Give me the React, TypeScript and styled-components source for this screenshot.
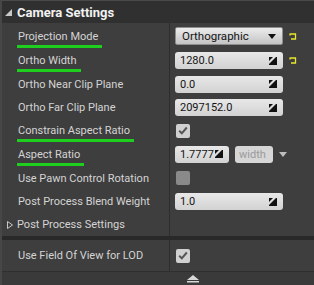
import React from "react";
import styled, { createGlobalStyle } from "styled-components";

const Global = createGlobalStyle`
  html, body { margin: 0; padding: 0; background: #3e3e3e; }
  body { font-family: Roboto, "Noto Sans", "Liberation Sans", sans-serif; }
`;

const Panel = styled.div`
  width: 314px;
  height: 285px;
  display: flex;
  flex-direction: column;
  background: #3e3e3e;
  border-left: 2px solid #474747;
  box-sizing: border-box;
  overflow: hidden;
`;

const Header = styled.div`
  height: 23px;
  flex: none;
  display: flex;
  align-items: center;
  gap: 5px;
  padding-left: 3px;
  background: #303030;
  border-top: 1px solid #4a4a4a;
  box-sizing: border-box;
  color: #f2f2f2;
  font-weight: 700;
  font-size: 13px;
`;

const Row = styled.div<{ $h: number }>`
  height: ${(p) => p.$h}px;
  flex: none;
  display: grid;
  grid-template-columns: 168px 1fr;
`;

const LabelCell = styled.div<{ $indent?: number }>`
  display: flex;
  align-items: center;
  gap: 4px;
  padding-left: ${(p) => p.$indent ?? 16}px;
  border-right: 1px solid #2d2d2d;
  color: #d4d4d4;
  font-size: 11px;
  white-space: nowrap;
`;

const ValueCell = styled.div`
  display: flex;
  align-items: center;
  gap: 6px;
  padding-left: 5px;
`;

const Label = styled.span<{ $mark?: boolean }>`
  position: relative;
  &::after {
    content: "";
    display: ${(p) => (p.$mark ? "block" : "none")};
    position: absolute;
    left: -1px;
    right: -4px;
    bottom: -5px;
    height: 3px;
    background: #1fcf1f;
  }
`;

const Combo = styled.div`
  width: 108px;
  height: 18px;
  box-sizing: border-box;
  border-radius: 2px;
  border: 1px solid #8e8e8e;
  background: linear-gradient(#ececec, #c4c4c4);
  display: flex;
  align-items: center;
  justify-content: space-between;
  padding: 0 6px 0 6px;
  color: #141414;
  font-size: 11.5px;
`;

const Field = styled.div<{ $w?: number }>`
  width: ${(p) => p.$w ?? 108}px;
  height: 17px;
  box-sizing: border-box;
  border-radius: 3px;
  background: linear-gradient(#e8e8e8, #d2d2d2);
  display: flex;
  align-items: center;
  justify-content: space-between;
  padding: 0 6px 0 5px;
  color: #141414;
  font-size: 11px;
`;

const GhostField = styled.div`
  width: 38px;
  height: 17px;
  box-sizing: border-box;
  border-radius: 3px;
  background: #d6d6d6;
  display: flex;
  align-items: center;
  padding-left: 4px;
  color: #9a9a9a;
  font-size: 11px;
`;

const Check = styled.div<{ $on?: boolean }>`
  width: 14px;
  height: 14px;
  margin-left: 1px;
  border-radius: 2px;
  background: ${(p) => (p.$on ? "#d0d0d0" : "#8a8a8a")};
  display: flex;
  align-items: center;
  justify-content: center;
`;

const Separator = styled.div`
  height: 4px;
  flex: none;
  background: #292929;
`;

const BottomBar = styled.div`
  flex: 1;
  display: flex;
  justify-content: center;
  padding-top: 3px;
  padding-left: 70px;
  background: #3a3a3a;
  border-top: 1px solid #2f2f2f;
`;

const SpinIcon = () => (
  <svg width="8" height="8" viewBox="0 0 8 8">
    <polygon points="0,0 4,0 0,4" fill="#111" />
    <polygon points="7,0 8,0 8,8 0,8 0,7" fill="#111" />
  </svg>
);

const ResetIcon = () => (
  <svg width="8" height="7" viewBox="0 0 8 7">
    <path d="M1 0.5 V2.5 M1 1 H6.5 V6 H2" stroke="#e8e82a" strokeWidth="1.3" fill="none" />
  </svg>
);

const CheckMark = () => (
  <svg width="10" height="9" viewBox="0 0 10 9">
    <path d="M1.2 4.8 L3.8 7.3 L8.8 1.5" stroke="#555" strokeWidth="2" fill="none" />
  </svg>
);

const App: React.FC = () => (
  <>
    <Global />
    <Panel>
      <Header>
        <svg width="7" height="7" viewBox="0 0 7 7">
          <polygon points="7,0 7,7 0,7" fill="#c8c8c8" />
        </svg>
        Camera Settings
      </Header>
      <Row $h={26}>
        <LabelCell>
          <Label $mark>Projection Mode</Label>
        </LabelCell>
        <ValueCell>
          <Combo>
            Orthographic
            <svg width="8" height="5" viewBox="0 0 8 5">
              <polygon points="0,0 8,0 4,5" fill="#111" />
            </svg>
          </Combo>
          <ResetIcon />
        </ValueCell>
      </Row>
      <Row $h={23}>
        <LabelCell>
          <Label $mark>Ortho Width</Label>
        </LabelCell>
        <ValueCell>
          <Field>
            1280.0
            <SpinIcon />
          </Field>
          <ResetIcon />
        </ValueCell>
      </Row>
      <Row $h={24}>
        <LabelCell>
          <Label>Ortho Near Clip Plane</Label>
        </LabelCell>
        <ValueCell>
          <Field>
            0.0
            <SpinIcon />
          </Field>
        </ValueCell>
      </Row>
      <Row $h={23}>
        <LabelCell>
          <Label>Ortho Far Clip Plane</Label>
        </LabelCell>
        <ValueCell>
          <Field>
            2097152.0
            <SpinIcon />
          </Field>
        </ValueCell>
      </Row>
      <Row $h={23}>
        <LabelCell>
          <Label $mark>Constrain Aspect Ratio</Label>
        </LabelCell>
        <ValueCell>
          <Check $on>
            <CheckMark />
          </Check>
        </ValueCell>
      </Row>
      <Row $h={24}>
        <LabelCell>
          <Label $mark>Aspect Ratio</Label>
        </LabelCell>
        <ValueCell>
          <Field $w={54}>
            1.7777
            <SpinIcon />
          </Field>
          <GhostField>width</GhostField>
          <svg width="8" height="5" viewBox="0 0 8 5">
            <polygon points="0,0 8,0 4,5" fill="#bdbdbd" />
          </svg>
        </ValueCell>
      </Row>
      <Row $h={24}>
        <LabelCell>
          <Label>Use Pawn Control Rotation</Label>
        </LabelCell>
        <ValueCell>
          <Check />
        </ValueCell>
      </Row>
      <Row $h={23}>
        <LabelCell>
          <Label>Post Process Blend Weight</Label>
        </LabelCell>
        <ValueCell>
          <Field>
            1.0
            <SpinIcon />
          </Field>
        </ValueCell>
      </Row>
      <Row $h={23}>
        <LabelCell $indent={5}>
          <svg width="6" height="8" viewBox="0 0 6 8">
            <polygon points="0.5,0.5 5.5,4 0.5,7.5" fill="none" stroke="#c8c8c8" strokeWidth="1" />
          </svg>
          <Label>Post Process Settings</Label>
        </LabelCell>
        <ValueCell />
      </Row>
      <Separator />
      <Row $h={31}>
        <LabelCell>
          <Label>Use Field Of View for LOD</Label>
        </LabelCell>
        <ValueCell>
          <Check $on>
            <CheckMark />
          </Check>
        </ValueCell>
      </Row>
      <BottomBar>
        <svg width="12" height="8" viewBox="0 0 12 8">
          <polygon points="6,0 12,5 0,5" fill="#d8d8d8" />
          <rect x="0" y="6" width="12" height="1.5" fill="#d8d8d8" />
        </svg>
      </BottomBar>
    </Panel>
  </>
);

export default App;
